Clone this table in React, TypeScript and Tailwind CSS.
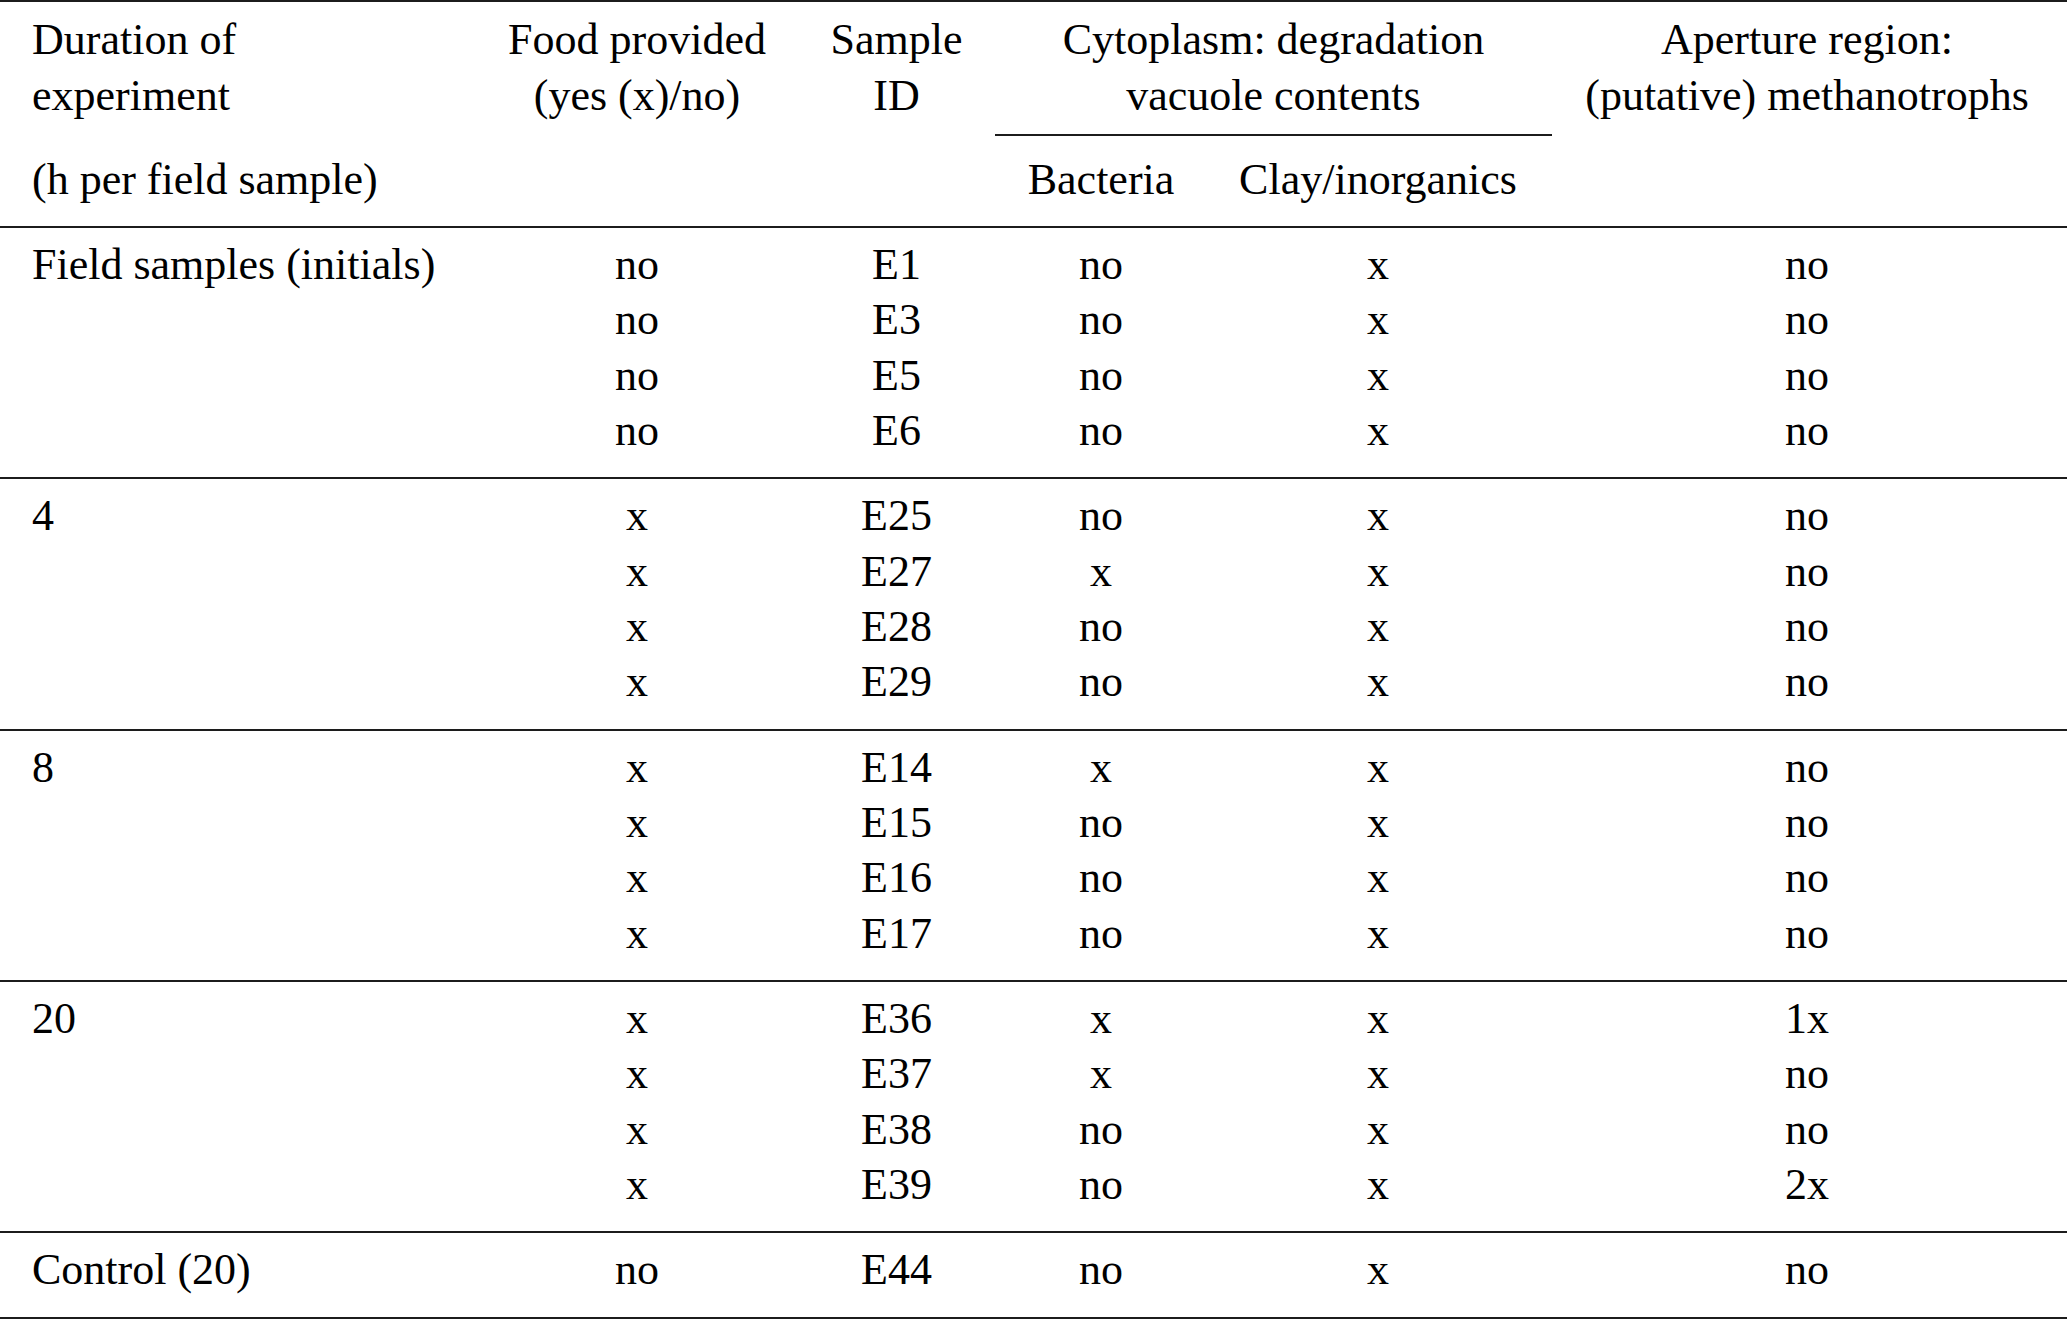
const COLS = "grid grid-cols-[520px_234px_285px_124px_430px_428px]";

type Row = [string, string, string, string, string];

const GROUPS: { label: string; rows: Row[] }[] = [
  {
    label: "Field samples (initials)",
    rows: [
      ["no", "E1", "no", "x", "no"],
      ["no", "E3", "no", "x", "no"],
      ["no", "E5", "no", "x", "no"],
      ["no", "E6", "no", "x", "no"],
    ],
  },
  {
    label: "4",
    rows: [
      ["x", "E25", "no", "x", "no"],
      ["x", "E27", "x", "x", "no"],
      ["x", "E28", "no", "x", "no"],
      ["x", "E29", "no", "x", "no"],
    ],
  },
  {
    label: "8",
    rows: [
      ["x", "E14", "x", "x", "no"],
      ["x", "E15", "no", "x", "no"],
      ["x", "E16", "no", "x", "no"],
      ["x", "E17", "no", "x", "no"],
    ],
  },
  {
    label: "20",
    rows: [
      ["x", "E36", "x", "x", "1x"],
      ["x", "E37", "x", "x", "no"],
      ["x", "E38", "no", "x", "no"],
      ["x", "E39", "no", "x", "2x"],
    ],
  },
  {
    label: "Control (20)",
    rows: [["no", "E44", "no", "x", "no"]],
  },
];

function Center({ children }: { children: React.ReactNode }) {
  return <div className="flex justify-center whitespace-nowrap">{children}</div>;
}

function Stack({ lines }: { lines: string[] }) {
  return (
    <div className="flex flex-col items-center whitespace-nowrap">
      {lines.map((l) => (
        <span key={l}>{l}</span>
      ))}
    </div>
  );
}

export default function App() {
  return (
    <div
      className="w-[2067px] bg-white text-[44px] text-black leading-[56px]"
      style={{ fontFamily: '"Liberation Serif", "Times New Roman", serif' }}
    >
      {/* header */}
      <div className="border-t-2 border-[#1c1c1c]">
        <div className={COLS}>
          <div className="pl-[32px] pt-[10px] whitespace-nowrap">
            <div>Duration of</div>
            <div>experiment</div>
          </div>
          <div className="pt-[10px]">
            <Stack lines={["Food provided", "(yes (x)/no)"]} />
          </div>
          <div className="pt-[10px]">
            <Stack lines={["Sample", "ID"]} />
          </div>
          <div className="col-span-2">
            <div className="ml-[-44px] mr-[41px] pt-[10px] pb-[10px] border-b-2 border-[#1c1c1c]">
              <Stack lines={["Cytoplasm: degradation", "vacuole contents"]} />
            </div>
          </div>
          <div className="pt-[10px]">
            <Stack lines={["Aperture region:", "(putative) methanotrophs"]} />
          </div>
        </div>
        <div className={`${COLS} pt-[16px] pb-[18px]`}>
          <div className="pl-[32px] whitespace-nowrap">(h per field sample)</div>
          <div />
          <div />
          <Center>Bacteria</Center>
          <Center>Clay/inorganics</Center>
          <div />
        </div>
      </div>

      {/* body */}
      {GROUPS.map((g, gi) => (
        <div
          key={g.label}
          className={`border-t-2 border-[#1c1c1c] pt-[9px] pb-[19px] leading-[55.33px] ${
            gi === GROUPS.length - 1 ? "border-b-2" : ""
          }`}
        >
          {g.rows.map((r, ri) => (
            <div key={ri} className={`${COLS} h-[55.33px]`}>
              <div className="pl-[32px] whitespace-nowrap">{ri === 0 ? g.label : ""}</div>
              {r.map((c, ci) => (
                <Center key={ci}>{c}</Center>
              ))}
            </div>
          ))}
        </div>
      ))}
    </div>
  );
}
